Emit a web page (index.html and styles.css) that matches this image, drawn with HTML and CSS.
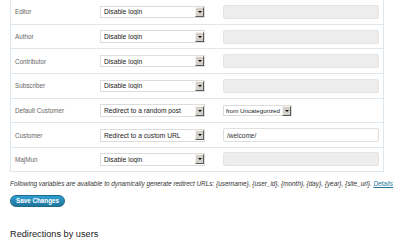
FILE: index.html
```html
<!DOCTYPE html>
<html>
<head>
<meta charset="utf-8">
<link rel="stylesheet" href="styles.css">
</head>
<body>
<div class="wrap">
  <div class="tbl">
    <div class="row">
      <div class="lbl">Editor</div>
      <div class="sel"><span class="val">Disable login</span><span class="arr"></span></div>
      <div class="inp dis"></div>
    </div>
    <div class="row">
      <div class="lbl">Author</div>
      <div class="sel"><span class="val">Disable login</span><span class="arr"></span></div>
      <div class="inp dis"></div>
    </div>
    <div class="row">
      <div class="lbl">Contributor</div>
      <div class="sel"><span class="val">Disable login</span><span class="arr"></span></div>
      <div class="inp dis"></div>
    </div>
    <div class="row">
      <div class="lbl">Subscriber</div>
      <div class="sel"><span class="val">Disable login</span><span class="arr"></span></div>
      <div class="inp dis"></div>
    </div>
    <div class="row">
      <div class="lbl">Default Customer</div>
      <div class="sel"><span class="val">Redirect to a random post</span><span class="arr"></span></div>
      <div class="sel small"><span class="val">from Uncategorized</span><span class="arr"></span></div>
    </div>
    <div class="row">
      <div class="lbl">Customer</div>
      <div class="sel"><span class="val">Redirect to a custom URL</span><span class="arr"></span></div>
      <div class="inp">/welcome/</div>
    </div>
    <div class="row last">
      <div class="lbl">MajMun</div>
      <div class="sel"><span class="val">Disable login</span><span class="arr"></span></div>
      <div class="inp dis"></div>
    </div>
  </div>
  <p class="note">Following variables are available to dynamically generate redirect URLs: {username}, {user_id}, {month}, {day}, {year}, {site_url}. <a href="#">Details</a></p>
  <div class="btn">Save Changes</div>
  <h3 class="head">Redirections by users</h3>
</div>
</body>
</html>
```
FILE: styles.css
```css
html, body {
  margin: 0;
  padding: 0;
  background: #fff;
}
body {
  font-family: "Liberation Sans", Arial, sans-serif;
  color: #333;
}
.wrap {
  padding: 0 16px 0 10px;
}
.tbl {
  border: 1px solid #dfe7ee;
  border-top: none;
  width: 372px;
}
.row {
  display: flex;
  align-items: center;
  height: 23.7px;
  border-bottom: 1px solid #dfe7ee;
}
.row.last {
  height: 22.5px;
  border-bottom: none;
}
.lbl {
  width: 85px;
  padding-left: 4px;
  font-size: 6.3px;
  color: #666;
}
.sel {
  box-sizing: border-box;
  width: 105px;
  height: 12.5px;
  border: 1px solid #dcdcdc;
  background: #fff;
  display: flex;
  align-items: center;
  font-size: 6.7px;
  color: #222;
  padding-left: 3px;
}
.sel .val {
  flex: 1;
  white-space: nowrap;
  overflow: hidden;
}
.arr {
  box-sizing: border-box;
  width: 9px;
  height: 10px;
  background: #d4d0c8;
  border-top: 1px solid #f4f2ee;
  border-left: 1px solid #f4f2ee;
  border-right: 1px solid #5a5a5a;
  border-bottom: 1px solid #5a5a5a;
  display: flex;
  align-items: center;
  justify-content: center;
}
.arr::after {
  content: "";
  border-left: 2px solid transparent;
  border-right: 2px solid transparent;
  border-top: 2px solid #111;
}
.sel.small {
  margin-left: 18px;
  width: 69px;
  height: 11.5px;
  font-size: 6.2px;
  padding-left: 2px;
}
.inp {
  box-sizing: border-box;
  margin-left: 18px;
  width: 156px;
  height: 14px;
  border: 1px solid #dfdfdf;
  border-radius: 2px;
  background: #fff;
  font-size: 6.5px;
  color: #333;
  padding-left: 3px;
  display: flex;
  align-items: center;
}
.inp.dis {
  background: #ededed;
  border-color: #e4e4e4;
}
.note {
  margin: 8px 0 0 0;
  font-size: 6.4px;
  font-style: italic;
  color: #333;
  white-space: nowrap;
}
.note a {
  color: #21759b;
  text-decoration: underline;
}
.btn {
  margin-top: 8px;
  width: 55px;
  height: 12px;
  box-sizing: border-box;
  border-radius: 6px;
  background: linear-gradient(#2e9fd2, #21759b);
  border: 1px solid #1e6a8d;
  color: #fff;
  font-weight: bold;
  font-size: 6.3px;
  display: flex;
  align-items: center;
  justify-content: center;
}
.head {
  margin: 22px 0 0 0;
  font-size: 9.2px;
  font-weight: normal;
  color: #222;
}
```
